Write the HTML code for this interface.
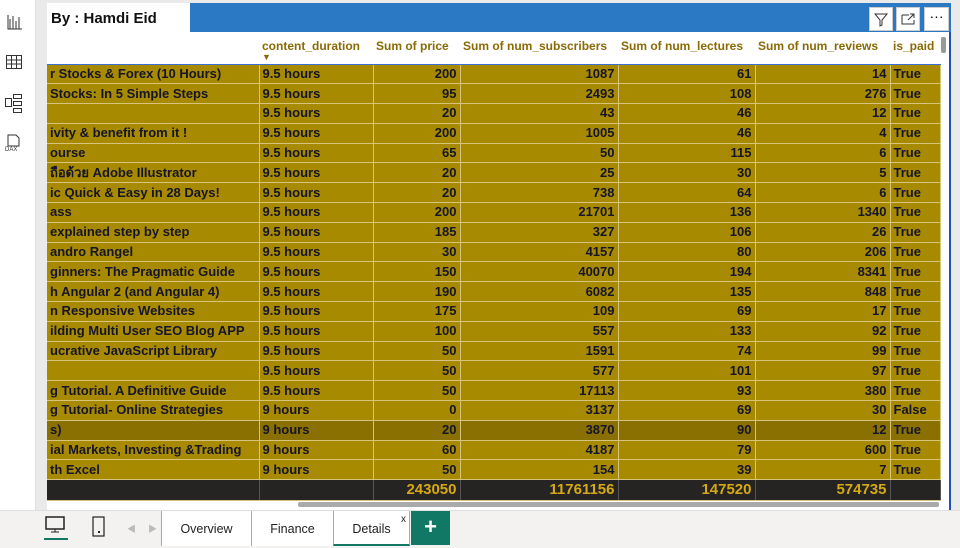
<!DOCTYPE html>
<html><head><meta charset="utf-8"><style>
*{margin:0;padding:0;box-sizing:border-box}
body{width:960px;height:548px;overflow:hidden;background:#fff;font-family:"Liberation Sans","Noto Sans CJK SC",sans-serif;position:relative}
.side{position:absolute;left:0;top:0;width:36px;height:510px;background:#fff;border-right:1px solid #e1dfdd}
.canvas{position:absolute;left:36px;top:0;width:924px;height:510px;background:#eaeaea}
.bottom{position:absolute;left:0;top:510px;width:960px;height:38px;background:#f3f2f1;border-top:1px solid #e1dfdd}
.vis{position:absolute;left:47px;top:3px;width:904px;height:507px;background:#fff;border-right:2px solid #1f4fb8}
.title{position:absolute;left:47px;top:3px;width:143px;height:29px;background:#fff;font-weight:bold;font-size:15px;padding:7px 0 0 4px;color:#111}
.blue{position:absolute;left:190px;top:3px;width:761px;height:29px;background:#2b78c5}
.btn{position:absolute;top:7px;width:24px;height:24px;background:#fff;border:1px solid #ccc}
table{position:absolute;left:47px;top:35px;border-collapse:collapse;font-size:13px;font-weight:bold;table-layout:fixed}
th{color:#8a6a05;text-align:left;height:29px;line-height:14px;vertical-align:top;padding:4px 3px 0;white-space:nowrap;background:#fff;border-bottom:1px solid #3a6fd0;font-size:12px;overflow:visible}
th span{display:block;line-height:8px;font-size:9px}
td{background:#a88a00;color:#14142a;height:19.8px;line-height:18px;padding:0 3px;border-right:1px solid #d6c47a;border-bottom:1px solid #d6c47a;white-space:nowrap;overflow:hidden}
td.r{text-align:right}
tr.h td{background:#8a7000}
tr.tot td{background:#252423;color:#d6a914;font-size:15px;height:21px;border-right:1px solid #555}
.tab{position:absolute;top:511px;height:35px;font-size:12.5px;color:#222;text-align:center;padding-top:11px;border-left:1px solid #aaa;background:#fff}
</style></head><body>
<div class="side">
<svg width="36" height="170" style="position:absolute;left:0;top:0" fill="none" stroke="#333" stroke-width="1">
<path d="M8 15v14h14M10 29V19M13 29V16M16 29V21M19 29V17"/>
<rect x="6.5" y="55.5" width="15" height="13"/><path d="M6.5 60h15M6.5 64h15M11.5 55.5v13M16.5 55.5v13"/>
<rect x="13.5" y="94.5" width="8" height="4"/><rect x="13.5" y="101.5" width="8" height="4"/><rect x="13.5" y="108.5" width="8" height="4"/><rect x="5.5" y="98.5" width="6" height="8"/>
<path d="M8 135h8l3 3v8H8z"/><text x="5" y="151" font-size="6" fill="#333" stroke="none">DAX</text>
</svg></div>
<div class="canvas"></div>
<div class="vis"></div>
<table>
<colgroup><col style="width:212px"><col style="width:114px"><col style="width:87px"><col style="width:158px"><col style="width:137px"><col style="width:135px"><col style="width:50px"></colgroup>
<tr><th></th><th>content_duration<span>▼</span></th><th>Sum of price</th><th>Sum of num_subscribers</th><th>Sum of num_lectures</th><th>Sum of num_reviews</th><th>is_paid</th></tr>
<tr><td>r Stocks &amp; Forex (10 Hours)</td><td>9.5 hours</td><td class="r">200</td><td class="r">1087</td><td class="r">61</td><td class="r">14</td><td>True</td></tr>
<tr><td>Stocks: In 5 Simple Steps</td><td>9.5 hours</td><td class="r">95</td><td class="r">2493</td><td class="r">108</td><td class="r">276</td><td>True</td></tr>
<tr><td></td><td>9.5 hours</td><td class="r">20</td><td class="r">43</td><td class="r">46</td><td class="r">12</td><td>True</td></tr>
<tr><td>ivity &amp; benefit from it !</td><td>9.5 hours</td><td class="r">200</td><td class="r">1005</td><td class="r">46</td><td class="r">4</td><td>True</td></tr>
<tr><td>ourse</td><td>9.5 hours</td><td class="r">65</td><td class="r">50</td><td class="r">115</td><td class="r">6</td><td>True</td></tr>
<tr><td>ถือด้วย Adobe Illustrator</td><td>9.5 hours</td><td class="r">20</td><td class="r">25</td><td class="r">30</td><td class="r">5</td><td>True</td></tr>
<tr><td>ic Quick &amp; Easy in 28 Days!</td><td>9.5 hours</td><td class="r">20</td><td class="r">738</td><td class="r">64</td><td class="r">6</td><td>True</td></tr>
<tr><td>ass</td><td>9.5 hours</td><td class="r">200</td><td class="r">21701</td><td class="r">136</td><td class="r">1340</td><td>True</td></tr>
<tr><td>explained step by step</td><td>9.5 hours</td><td class="r">185</td><td class="r">327</td><td class="r">106</td><td class="r">26</td><td>True</td></tr>
<tr><td>andro Rangel</td><td>9.5 hours</td><td class="r">30</td><td class="r">4157</td><td class="r">80</td><td class="r">206</td><td>True</td></tr>
<tr><td>ginners: The Pragmatic Guide</td><td>9.5 hours</td><td class="r">150</td><td class="r">40070</td><td class="r">194</td><td class="r">8341</td><td>True</td></tr>
<tr><td>h Angular 2 (and Angular 4)</td><td>9.5 hours</td><td class="r">190</td><td class="r">6082</td><td class="r">135</td><td class="r">848</td><td>True</td></tr>
<tr><td>n Responsive Websites</td><td>9.5 hours</td><td class="r">175</td><td class="r">109</td><td class="r">69</td><td class="r">17</td><td>True</td></tr>
<tr><td>ilding Multi User SEO Blog APP</td><td>9.5 hours</td><td class="r">100</td><td class="r">557</td><td class="r">133</td><td class="r">92</td><td>True</td></tr>
<tr><td>ucrative JavaScript Library</td><td>9.5 hours</td><td class="r">50</td><td class="r">1591</td><td class="r">74</td><td class="r">99</td><td>True</td></tr>
<tr><td></td><td>9.5 hours</td><td class="r">50</td><td class="r">577</td><td class="r">101</td><td class="r">97</td><td>True</td></tr>
<tr><td>g Tutorial. A Definitive Guide</td><td>9.5 hours</td><td class="r">50</td><td class="r">17113</td><td class="r">93</td><td class="r">380</td><td>True</td></tr>
<tr><td>g Tutorial- Online Strategies</td><td>9 hours</td><td class="r">0</td><td class="r">3137</td><td class="r">69</td><td class="r">30</td><td>False</td></tr>
<tr class="h"><td>s)</td><td>9 hours</td><td class="r">20</td><td class="r">3870</td><td class="r">90</td><td class="r">12</td><td>True</td></tr>
<tr><td>ial Markets, Investing &amp;Trading</td><td>9 hours</td><td class="r">60</td><td class="r">4187</td><td class="r">79</td><td class="r">600</td><td>True</td></tr>
<tr><td>th Excel</td><td>9 hours</td><td class="r">50</td><td class="r">154</td><td class="r">39</td><td class="r">7</td><td>True</td></tr>
<tr class="tot"><td></td><td></td><td class="r">243050</td><td class="r">11761156</td><td class="r">147520</td><td class="r">574735</td><td></td></tr>
</table>
<div class="title">By : Hamdi Eid</div>
<div class="blue"></div>
<div class="btn" style="left:869px"><svg width="22" height="22"><path d="M5 6h12l-5 6v5l-2 1v-6z" fill="none" stroke="#333"/></svg></div>
<div class="btn" style="left:896px"><svg width="22" height="22"><path d="M5 7h7M5 7v9h12v-4M13 6h4v4M17 6l-6 6" fill="none" stroke="#333"/></svg></div>
<div class="btn" style="left:924px;width:25px;font-size:14px;text-align:center;line-height:16px">···</div>
<div style="position:absolute;left:941px;top:37px;width:5px;height:16px;background:#999;border-radius:2px"></div>
<div style="position:absolute;left:298px;top:502px;width:641px;height:5px;background:#aaa;border-radius:2px"></div>
<div class="bottom"></div>
<svg style="position:absolute;left:44px;top:516px" width="24" height="26"><rect x="2" y="1" width="18" height="12" fill="none" stroke="#222" stroke-width="1.5"/><path d="M11 13v3M7 16h8" stroke="#222"/><rect x="0" y="22" width="24" height="2" fill="#117865"/></svg>
<svg style="position:absolute;left:92px;top:516px" width="14" height="22"><rect x="1" y="1" width="11" height="19" fill="none" stroke="#222" stroke-width="1.2"/><rect x="6" y="15" width="2" height="2" fill="#222"/></svg>
<div style="position:absolute;left:127px;top:522px;font-size:9px;color:#bbb">◀</div>
<div style="position:absolute;left:148px;top:522px;font-size:9px;color:#bbb">▶</div>
<div class="tab" style="left:161px;width:90px">Overview</div>
<div class="tab" style="left:251px;width:82px">Finance</div>
<div class="tab" style="left:333px;width:77px;border-bottom:2px solid #117865;border-right:1px solid #aaa">Details<span style="position:absolute;right:3px;top:3px;font-size:10px">x</span></div>
<div style="position:absolute;left:411px;top:511px;width:39px;height:34px;background:#117865;color:#fff;font-size:22px;font-weight:bold;text-align:center;line-height:32px">+</div>
</body></html>
